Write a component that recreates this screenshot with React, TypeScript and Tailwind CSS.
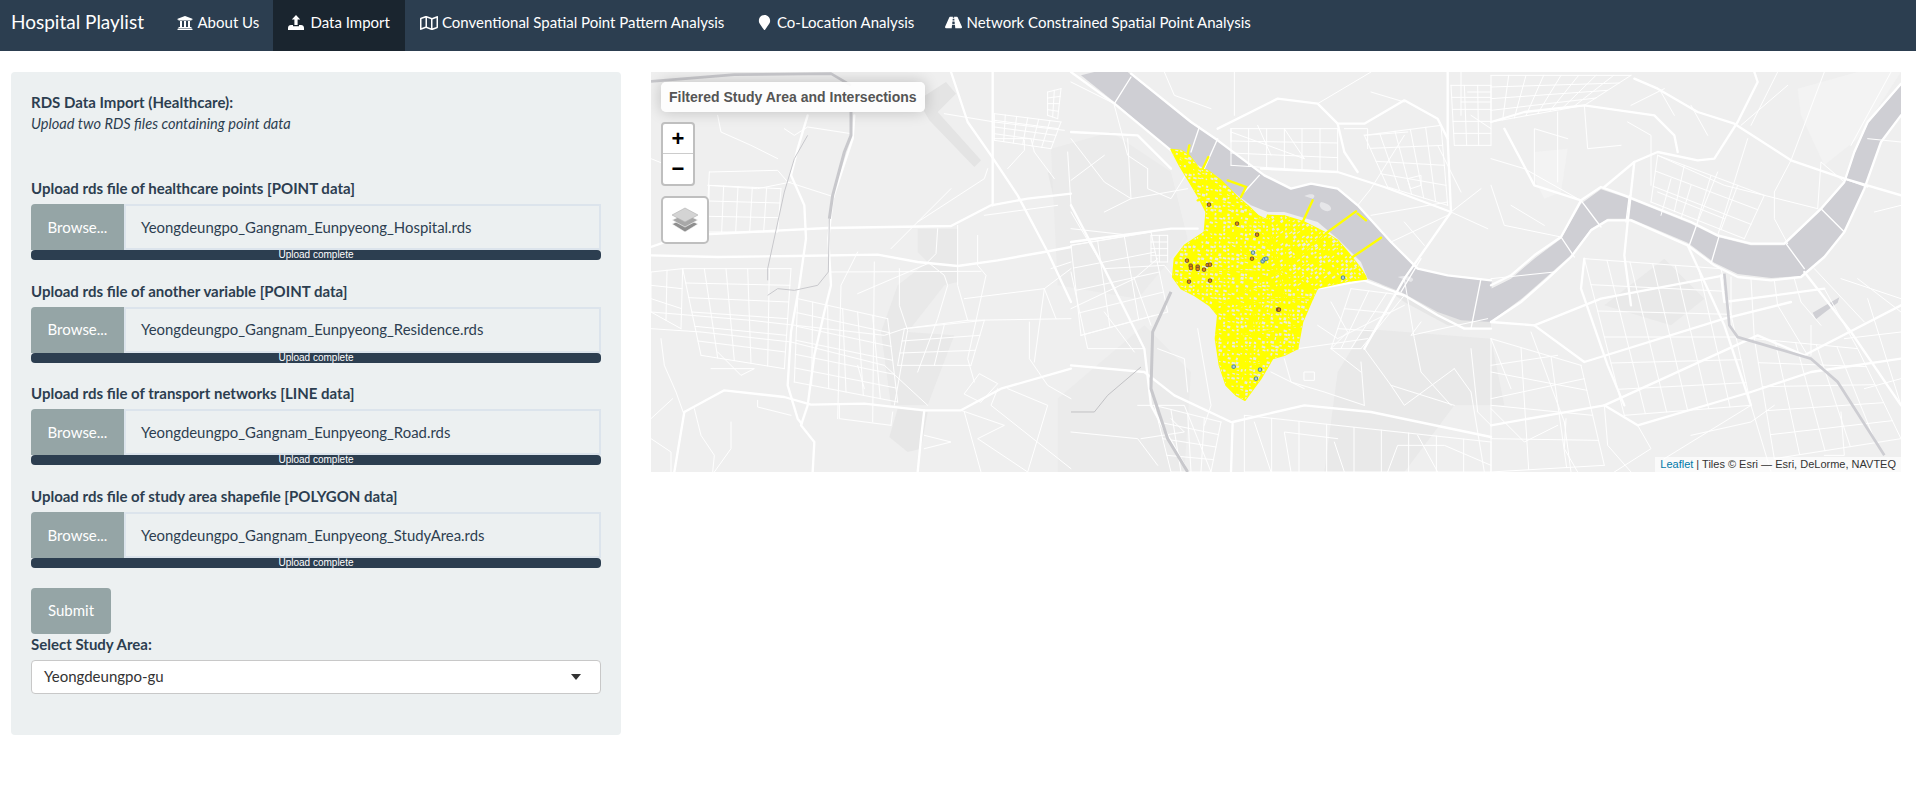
import { FaMapMarker, FaRegMap, FaRoad, FaUniversity } from "react-icons/fa";

const navItems = [
  { label: "About Us", w: "w-[111px]", iw: "w-[20.5px]", icon: <FaUniversity size={16} /> },
  { label: "Data Import", w: "w-[132px]", iw: "w-[22.5px]", icon: <UploadIcon />, active: true },
  { label: "Conventional Spatial Point Pattern Analysis", w: "w-[335px]", iw: "w-[22px]", icon: <FaRegMap size={18} /> },
  { label: "Co-Location Analysis", w: "w-[190px]", iw: "w-[22px]", icon: <FaMapMarker size={15} className="ml-[2px]" /> },
  { label: "Network Constrained Spatial Point Analysis", w: "w-[322px]", iw: "w-[21.5px]", icon: <FaRoad size={17} /> },
];

const uploads = [
  { label: "Upload rds file of healthcare points [POINT data]", file: "Yeongdeungpo_Gangnam_Eunpyeong_Hospital.rds" },
  { label: "Upload rds file of another variable [POINT data]", file: "Yeongdeungpo_Gangnam_Eunpyeong_Residence.rds" },
  { label: "Upload rds file of transport networks [LINE data]", file: "Yeongdeungpo_Gangnam_Eunpyeong_Road.rds" },
  { label: "Upload rds file of study area shapefile [POLYGON data]", file: "Yeongdeungpo_Gangnam_Eunpyeong_StudyArea.rds" },
];

function UploadIcon() {
  return (
    <svg width="16" height="15" viewBox="0 0 16 15" fill="currentColor">
      <path d="M8 0l4.2 4.6H9.6V10H6.4V4.6H3.8z" />
      <path d="M0 13c0-1.7 1.2-3 3-3h2v1.3h6V10h2c1.8 0 3 1.3 3 3v2H0z" />
    </svg>
  );
}

// street blocks: lines across a quad a-b-c-d
type P = [number, number];
function grid(a: P, b: P, c: P, d: P, nu: number, nv: number) {
  const mix = (p: P, q: P, t: number): P => [p[0] + (q[0] - p[0]) * t, p[1] + (q[1] - p[1]) * t];
  const line = (p: P, q: P) => `M${p[0].toFixed(0)} ${p[1].toFixed(0)}L${q[0].toFixed(0)} ${q[1].toFixed(0)}`;
  const out: string[] = [];
  for (let i = 0; i <= nu; i++) out.push(line(mix(a, b, i / nu), mix(d, c, i / nu)));
  for (let j = 0; j <= nv; j++) out.push(line(mix(a, d, j / nv), mix(b, c, j / nv)));
  return out;
}

// map artwork, coordinates are the 3x pixels of each third of the map
const leftMajor = [
  "M0 525L100 490L240 483L530 468L900 462L1020 400L1130 380L1260 365",
  "M0 550L200 555L430 552L680 548L800 570L920 582L1040 565L1180 540L1260 525",
  "M610 130L605 200L545 380L532 500L540 640L520 720L490 850L470 1000L450 1060L490 1110L485 1200",
  "M420 310L460 400L465 500L445 640L420 780L410 940L440 1040L452 1055",
  "M900 0L950 150L1020 250L1100 370L1190 540L1260 690",
  "M100 1020L220 955L400 975L480 998L640 995L820 1015L930 1015L1050 950L1260 890",
  "M100 1020L85 1110L70 1200",
  "M470 130L440 230L420 310",
  "M820 1015L810 1100L800 1200",
  "M1025 0V400",
];
const leftMinor = [
  "M880 125L1030 150L1240 175", "M175 300L380 295L410 330L550 375", "M175 300L170 400", "M170 340L320 350L420 330",
  "M200 130L210 180L300 220L380 260", "M0 260L50 280", "M400 170L430 190L470 165L600 185", "M800 450L1000 320L1010 290",
  "M720 530L900 350", "M0 720L300 745L700 790L760 770L950 745L1260 740", "M0 770L150 780L420 810L700 880L830 1000",
  "M620 665L830 575", "M540 600L990 598", "M620 540L570 640L560 1040", "M670 570L665 1050", "M745 590V700L770 775L730 1000",
  "M860 470L855 545L830 570L880 610L890 640L860 740L800 900", "M920 460L920 640L950 745",
  "M980 490V580L1005 610L950 860L970 930", "M1135 750V860L1190 940L1260 980", "M940 680L1180 650L1260 590",
  "M1030 200H1140L1150 240L1210 320", "M1120 205V235L1070 290", "M1180 650L1215 740", "M1000 430L1220 400",
  "M930 1015L1060 1060L980 1100L1130 1200", "M1040 950L1020 1000L1260 1190", "M940 1020L990 1200", "M820 1090L900 1110L820 1130",
  "M940 965L985 905L1040 935L990 990Z", "M30 800L40 880L75 960L100 1030",
  "M200 840L270 910L310 890L180 890", "M65 980L0 1040M130 1010L150 1090L190 1150L185 1200", "M240 1050L240 1130L190 1200",
  "M320 985V1005L420 1030M565 1000V1040L720 1060M725 1020L720 1060", "M1180 650L1150 870", "M620 880L640 950", "M1200 590L1260 570",
  "M1070 950L1190 1000L1130 1200", "M1250 240L1260 400", "M0 1100L60 1140L60 1200",
  ...grid([95, 590], [420, 590], [400, 890], [150, 850], 5, 6),
  ...grid([175, 340], [390, 350], [380, 480], [170, 480], 5, 3),
  ...grid([440, 680], [710, 740], [740, 990], [430, 930], 6, 6),
  ...grid([0, 600], [95, 590], [90, 770], [0, 720], 2, 3),
  ...grid([1030, 125], [1230, 150], [1200, 230], [1030, 205], 6, 4),
  ...grid([1190, 60], [1230, 50], [1220, 140], [1190, 130], 2, 4),
  ...grid([760, 770], [1000, 745], [960, 880], [740, 880], 2, 3),
];
const rightBridges = ["M130 95L180 15", "M360 240L385 165M400 290L440 200M520 360L565 310", "M990 660L1050 560M1200 770L1230 620"];
const rightMajor = [
  "M180 5L360 150L440 205L580 310L660 350L720 335L800 350L860 400L960 510L1040 590L1130 610L1260 625",
  "M0 0L130 95L300 235",
  "M440 170L620 80L740 95L800 155L880 155L1000 85L1100 140L1130 200L1140 420L1000 620L880 830",
  "M570 290L800 300L940 345L1140 420",
  "M740 650L880 625L1000 670L1100 730L1180 770L1260 770",
  "M480 1200L485 1050L700 1000L900 1020L1260 1095",
  "M0 180L200 190L300 290",
  "M0 400L100 590L220 830L240 1000L340 1180",
  "M0 880L220 900L310 970L480 1050",
  "M0 510L300 470L380 470",
  "M1130 0V200",
  "M800 155L820 240L860 300",
];
const rightMinor = [
  "M0 30L130 95", "M130 100L170 250L230 290", "M170 200L180 380L100 420", "M0 200L100 330L180 380", "M230 290L230 350L300 380L350 300",
  "M180 380L350 350", "M0 325L100 250", "M280 0L310 70L420 110", "M490 0V130", "M900 60L1000 90", "M740 95L900 0",
  "M480 180L700 260M480 210L480 170M560 160L600 250M640 170L700 260", "M820 170H890V230M880 190L1010 180", "M1000 190L900 350L860 400",
  "M1100 220L1170 360", "M1170 0V130M1190 60H1260M1200 130L1260 170M1170 90H1260", "M1010 320L1050 310L1050 340L1020 350Z",
  "M1140 420L1250 470M1230 350L1140 420", "M900 430L1130 390", "M1000 450L1060 520", "M960 510L1130 430",
  "M0 420L100 590", "M0 470L180 490M0 520L240 480", "M100 590L280 580L320 630",
  "M0 710L190 620L260 560", "M30 790L250 730", "M0 600L50 830L220 830", "M100 720L190 840", "M190 620L240 760",
  "M780 690L830 780L780 830L870 900", "M880 830L960 940L1000 1000L1150 890", "M1000 620L1030 800L1050 900L1140 1000", "M1050 750L1020 790L1250 740",
  "M740 760L800 800L1000 700", "M680 830L890 800", "M870 870L880 1000M960 940L1150 1000M1200 830L1220 1020L1260 1060",
  "M640 860L660 930L760 960L880 1000", "M600 900L700 950", "M700 900H730V925H700Z", "M300 1040L340 1080L210 1100", "M200 1000L340 1000L380 1100L420 1200",
  "M350 960L340 860L260 830", "M380 770L420 1000L400 1060", "M0 1080L200 1100L260 1180", "M550 1050L600 1200M660 1200L640 1080L800 1100",
  "M790 1110L820 1200M950 1200L980 1120L1120 1120L1260 1180", "M1040 1090L1100 1200", "M1150 890L1200 960L1240 1200",
  ...grid([240, 490], [290, 490], [290, 570], [240, 570], 2, 4),
  ...grid([480, 170], [800, 170], [800, 300], [480, 280], 6, 3),
  ...grid([880, 190], [1110, 160], [1130, 400], [950, 345], 5, 4),
  ...grid([1140, 40], [1260, 40], [1260, 220], [1150, 220], 3, 5),
  ...grid([0, 520], [240, 480], [290, 720], [30, 790], 3, 4),
  ...grid([250, 1000], [450, 1050], [420, 1200], [300, 1200], 4, 4),
  ...grid([520, 1030], [1260, 1110], [1260, 1200], [520, 1200], 9, 1),
  ...grid([840, 650], [1000, 670], [870, 830], [780, 830], 3, 3),
];
const farBridges = ["M210 495L250 555M270 385L330 465M415 370L405 450M620 450L595 520M685 490L660 575M885 515L940 590M990 410L1060 480M1060 320L1130 345"];
const farMajor = [
  "M0 640L60 610L130 550L210 495L270 385L330 345L400 370L600 450L680 490L780 515L880 515L990 410L1060 330L1090 240L1130 150L1230 35",
  "M0 750L90 690L170 620L240 555L300 475L350 445L420 445L590 520L670 580L740 615L840 625L930 615L1000 555L1060 480L1120 350L1170 210L1230 130",
  "M340 345L430 270L500 240L620 265L670 260L740 150L800 30L790 0",
  "M430 270L410 450L400 550L420 700",
  "M0 150L100 120L280 100L490 130L550 190L560 240",
  "M430 20L500 50L620 120L730 155L900 265L1060 320L1230 370",
  "M40 170L130 340L270 385",
  "M0 750L130 760L330 680L700 610",
  "M690 610L700 690L1000 650",
  "M130 760L280 870L700 740L900 690",
  "M340 1000L800 790L940 850L1230 700",
  "M0 1060L340 1000L440 1060L780 960",
  "M280 560L270 650L350 880L400 1000",
  "M590 520L700 760L780 1000",
  "M940 600L1080 780L1230 1000",
  "M780 960L960 900L1230 860",
];
const farMinor = [
  "M510 60L550 130", "M500 250L700 340L980 410", "M680 300L620 450", "M770 200L680 490", "M900 265L850 360L850 440L890 515",
  "M860 0L780 160M1060 330L990 270L980 410", "M130 340L130 170L230 200", "M200 120L200 330", "M280 100L290 230L390 220", "M410 150L480 190L480 340",
  "M0 260L100 290L260 380", "M0 340L40 460L210 495", "M60 400L160 460",
  "M420 100L520 50", "M750 160L890 40", "M900 265L1000 0", "M1080 220L1200 0", "M540 320L510 430", "M600 340L570 440", "M500 360L700 440",
  "M120 780L220 1050", "M0 800L60 950", "M0 880L200 850", "M0 980L280 920", "M220 1050L240 1200",
  "M720 615L720 760L740 795", "M780 620L790 800", "M850 625L860 700L950 850", "M910 620L930 690L990 760", "M970 590L1120 750",
  "M1000 650L1100 830", "M1130 680L1230 1000", "M1050 620L1230 680", "M1100 620L1230 720", "M1060 800L1230 780", "M960 760V850", "M1120 950L1230 920",
  "M340 1000L350 1120L420 1200", "M440 1060L480 1130L370 1200", "M600 1090L780 1050L850 1000", "M520 1160L780 1000", "M780 1000L840 1200", "M1000 1150L1060 1150L1050 1020",
  "M0 1010L100 1110L200 1060", "M225 1040L220 1130L260 1200", "M650 190L600 100", "M0 620L190 600", "M1130 200L1230 210", "M1150 420L1230 400",
  ...grid([0, 10], [420, 10], [280, 100], [0, 150], 8, 4),
  ...grid([280, 560], [690, 590], [780, 1000], [400, 1030], 6, 6),
  ...grid([500, 250], [820, 370], [760, 500], [480, 390], 4, 3),
  ...grid([0, 800], [270, 880], [340, 1180], [0, 1200], 3, 4),
  ...grid([790, 800], [1100, 830], [1230, 1100], [850, 1160], 5, 5),
];
const zonePts = "300,232 330,235 355,250 385,290 410,295 450,325 500,375 535,405 560,430 585,442 590,430 640,432 700,450 760,480 800,505 830,540 870,590 885,615 830,628 740,648 725,680 695,750 680,830 640,850 605,860 570,920 522,985 495,970 465,940 445,880 433,800 440,730 415,700 370,670 330,650 305,615 310,560 340,520 400,480 405,420 385,380 355,330 325,280";
const zoneSpokes = "M355 220L350 245M412 255L395 290M470 325L525 345L510 375M725 385L695 450M855 418L770 480M860 425L885 445M930 497L845 555M380 385L410 375M885 620L840 625";
const zoneRoads = [
  "M560 430L625 600L740 650M590 430L625 600M625 600L770 480M625 600L445 700M625 600L310 590M625 600L680 830M400 480L625 600M330 260L560 430M640 432L640 560",
  "M440 720L600 680L725 680M450 800L690 760M470 900L600 860M540 640L560 830M580 700L500 950",
];
const orange = [[414, 398], [498, 455], [558, 488], [543, 560], [348, 566], [359, 581], [360, 588], [380, 584], [380, 591], [399, 593], [410, 579], [417, 578], [354, 629], [417, 626], [621, 713], [624, 713]];
const blue = [[546, 542], [575, 568], [580, 562], [586, 560], [816, 617], [488, 884], [567, 893], [555, 920]];

// little holes between the yellow network lines
function zoneGaps() {
  const out: { x: number; y: number; w: number; h: number; r: number }[] = [];
  let seed = 7;
  const next = () => {
    seed = (seed * 16807) % 2147483647;
    return seed / 2147483647;
  };
  for (let y = 230; y < 990; y += 12) {
    for (let x = 300; x < 890; x += 13) {
      if (next() < 0.3) continue;
      out.push({ x: x + next() * 3, y: y + next() * 3, w: 4 + next() * 7, h: 3 + next() * 5, r: x > 590 && y < 640 ? -35 : 15 });
    }
  }
  return out;
}

function Roads({ major, minor, bridges }: { major: string[]; minor: string[]; bridges?: string[] }) {
  return (
    <g fill="none" stroke="#ffffff" strokeLinejoin="round" strokeLinecap="round">
      <g strokeWidth="3">{minor.map((d, i) => <path key={i} d={d} />)}</g>
      <g strokeWidth="4">{bridges?.map((d, i) => <path key={i} d={d} />)}</g>
      <g strokeWidth="7">{major.map((d, i) => <path key={i} d={d} />)}</g>
    </g>
  );
}

function MapArt() {
  return (
    <svg width="1250" height="400" viewBox="0 0 1250 400" className="block">
      <defs>
        <clipPath id="zone"><polygon points={zonePts} /></clipPath>
      </defs>
      <rect width="1250" height="400" fill="#efefef" />
      {/* soft land patches and the water go first, roads run over them */}
      <g transform="scale(0.33333)">
        <path d="M800 85L885 30L915 65L860 120L990 265L970 285L835 145Z" fill="#e4e4e4" />
        <path d="M800 470H920V630L880 640L770 780L910 790L860 920L830 1000H720L690 780L740 640L830 570L800 540Z" fill="#e9e9e9" />
        <path d="M740 1010L830 1020L810 1130L770 1140L715 1095Z" fill="#e7e7e7" />
        <path d="M1190 300L1260 330V480L1220 430Z" fill="#e8e8e8" />
      </g>
      <g transform="translate(420 0) scale(0.33333)">
        <path d="M-60 230L120 180L300 300L350 500L200 680L-40 640Z" fill="#ebebeb" />
        <path d="M880 770L1260 800L1300 1000L1150 1000L1000 1200L760 1200L800 900Z" fill="#e9e9e9" />
        <path d="M-40 980L220 760L360 900L340 1200H-40Z" fill="#ebebeb" />
        <path d="M880 600L1000 690L1130 760L1260 770V630L1140 625L1040 600L960 540L900 560Z" fill="#e6e6e6" />
        <path d="M30 10L70 0H170L360 150L440 205L580 310L660 350L720 335L800 350L860 400L960 510L1040 590L1130 610L1262 625V750L1170 745L1100 720L990 660L890 620L870 570L800 500L740 450L640 420L590 420L540 400L500 370L400 290L300 235L130 90Z" fill="#cfcfd4" />
        <path d="M700 372C720 362 740 368 725 380Z M750 390C780 395 790 415 770 418C750 415 740 400 750 390Z M980 615C1010 605 1040 620 1020 630Z" fill="#e6e6e9" />
      </g>
      <g transform="translate(840 0) scale(0.33333)">
        <path d="M920 50L1100 0L1230 0L1100 200L1000 280L930 130Z" fill="#f3f3f3" />
        <path d="M130 240L230 230L210 360L160 380L130 320Z" fill="#f3f3f3" />
        <path d="M340 700L520 560L640 680L540 760Z" fill="#e9e9e9" />
        <path d="M0 650L60 620L130 560L210 500L270 395L330 352L400 375L600 455L680 495L780 520L880 520L990 415L1060 335L1090 245L1130 155L1231 38V130L1170 210L1120 350L1060 480L1000 555L930 612L840 618L740 606L670 572L590 512L420 440L350 440L300 470L240 550L170 612L90 682L0 748Z" fill="#cfcfd4" />
        <path d="M965 722L1045 676L1040 692L1000 722L975 742Z" fill="#cfcfd4" />
      </g>
      {/* left third */}
      <g transform="scale(0.33333)">
        <Roads major={leftMajor} minor={leftMinor} />
        <g fill="none" stroke="#c8c8cc" strokeLinejoin="round">
          <path d="M0 28L250 8L540 5L600 40" strokeWidth="8" />
          <path d="M600 120L600 190L580 240L545 370L535 440" strokeWidth="9" />
          <path d="M535 440L532 600L500 640L430 655L380 650L350 670" strokeWidth="3" />
          <path d="M470 190L430 260L400 360L350 590L350 625" strokeWidth="3" />
        </g>
      </g>
      {/* right third */}
      <g transform="translate(840 0) scale(0.33333)">
        <Roads major={farMajor} minor={farMinor} bridges={farBridges} />
        <path d="M700 605L715 760L740 795L960 860L1040 930L1180 1150" fill="none" stroke="#cdcdd2" strokeWidth="8" />
      </g>
      {/* middle third */}
      <g transform="translate(420 0) scale(0.33333)">
        <Roads major={rightMajor} minor={rightMinor} bridges={rightBridges} />
        <g fill="none" strokeLinejoin="round">
          <path d="M300 660L245 780L240 950L290 1100L350 1200" strokeWidth="9" stroke="#c8c8cc" />
          <path d="M0 1020L70 1020L110 970L210 885" strokeWidth="2.5" stroke="#b9b9bd" />
        </g>
        <polygon points={zonePts} fill="#ffff00" stroke="#ffff00" strokeWidth="4" strokeLinejoin="round" />
        <g clipPath="url(#zone)" fill="#ebebe2">
          {zoneGaps().map((g, i) => (
            <rect key={i} x={g.x} y={g.y} width={g.w} height={g.h} transform={`rotate(${g.r} ${g.x} ${g.y})`} />
          ))}
        </g>
        <g fill="none" stroke="#ffff00" strokeWidth="5" strokeLinecap="round">
          {zoneRoads.map((d) => <path key={d} d={d} />)}
          <path d={zoneSpokes} strokeWidth="7" />
        </g>
        <g strokeWidth="3">
          {orange.map(([x, y]) => (
            <rect key={`${x}-${y}`} x={x - 5} y={y - 5} width="10" height="10" rx="3" fill="#e8860c" stroke="#6b5128" />
          ))}
          {blue.map(([x, y]) => (
            <rect key={`${x}-${y}`} x={x - 5} y={y - 5} width="10" height="10" rx="3" fill="#b4cfd8" stroke="#46809c" />
          ))}
        </g>
      </g>
    </svg>
  );
}

export default function App() {
  return (
    <div className="h-[802px] bg-white overflow-hidden text-[15px] leading-[21px] text-[#2c3e50] [font-family:Lato,sans-serif]">
      <nav className="h-[51px] flex bg-[#2c3e50] text-white pl-[11px]">
        <div className="w-[151px] pt-[11px] text-[19px]">Hospital Playlist</div>
        {navItems.map((item) => (
          <div key={item.label} className={`flex items-start pl-[15px] pt-[12px] whitespace-nowrap ${item.w} ${item.active ? "bg-[#1a252f]" : ""}`}>
            <span className={`h-[21px] flex items-center shrink-0 ${item.iw}`}>{item.icon}</span>
            {item.label}
          </div>
        ))}
      </nav>

      <div className="flex pl-[11px] pt-[21px]">
        <div className="w-[610px] h-[663px] shrink-0 bg-[#ecf0f1] rounded-[4px] px-[20px] pt-[20px]">
          <div className="font-bold">RDS Data Import (Healthcare):</div>
          <div className="italic text-[14.6px]">Upload two RDS files containing point data</div>

          <div className="mt-[44px]">
            {uploads.map((u) => (
              <div key={u.label} className="mb-[20.7px]">
                <div className="font-bold mb-[5px]">{u.label}</div>
                <div className="flex h-[46px]">
                  <div className="w-[93px] shrink-0 flex items-center justify-center bg-[#95a5a6] text-white rounded-tl-[4px]">Browse...</div>
                  <div className="flex-1 flex items-center pl-[15px] border-2 border-[#dce4ec] bg-[#ecf0f1] text-[14.9px]">{u.file}</div>
                </div>
                <div className="h-[10px] rounded-[4px] bg-[#2c3e50] text-white text-[10px] leading-[10px] text-center overflow-hidden [font-family:'Liberation_Sans',sans-serif]">Upload complete</div>
              </div>
            ))}
          </div>

          <div className="w-[80px] h-[46px] -mt-[1px] flex items-center justify-center bg-[#95a5a6] text-white rounded-[4px]">Submit</div>
          <div className="font-bold">Select Study Area:</div>
          <div className="mt-[5px] h-[34px] flex items-center justify-between bg-white border border-[#c8c8c8] rounded-[4px] pl-[12px] pr-[19px] text-[#333333]">
            Yeongdeungpo-gu
            <span className="w-0 h-0 border-x-[5px] border-x-transparent border-t-[6px] border-t-[#333333]" />
          </div>
        </div>

        <div className="relative ml-[30px] w-[1250px] h-[400px] shrink-0 overflow-hidden [font-family:'Liberation_Sans',sans-serif]">
          <MapArt />
          <div className="absolute left-[10px] top-[10px] w-[264px] h-[30px] flex items-center pl-[8px] bg-white/90 rounded-[5px] shadow-[0_0_15px_rgba(0,0,0,0.2)] text-[14px] font-bold text-[#555555] whitespace-nowrap">
            Filtered Study Area and Intersections
          </div>
          <div className="absolute left-[10px] top-[50px] w-[34px] border-2 border-[#bfbfbf] rounded-[4px] bg-white text-black font-bold text-center">
            <div className="h-[30px] border-b border-[#cccccc] text-[22px] leading-[30px]">+</div>
            <div className="h-[30px] text-[22px] leading-[30px]">−</div>
          </div>
          <div className="absolute left-[10px] top-[124px] w-[48px] h-[48px] border-2 border-[#bfbfbf] rounded-[5px] bg-white flex items-center justify-center">
            <svg width="28" height="26" viewBox="0 0 28 26">
              <path d="M14 11L27 17L14 25L1 17Z" fill="#8f8f8f" stroke="#ffffff" strokeWidth="0.6" />
              <path d="M14 7L27 13L14 20L1 13Z" fill="#a8a8a8" stroke="#ffffff" strokeWidth="0.6" />
              <path d="M14 1L27 8L14 15L1 8Z" fill="#d4d4d4" stroke="#b0b0b0" strokeWidth="0.6" />
            </svg>
          </div>
          <div className="absolute right-0 bottom-0 h-[15px] px-[5px] bg-white/70 text-[11px] leading-[15px] text-[#333333] whitespace-nowrap">
            <span className="text-[#0078a8]">Leaflet</span> | Tiles © Esri — Esri, DeLorme, NAVTEQ
          </div>
        </div>
      </div>
    </div>
  );
}
